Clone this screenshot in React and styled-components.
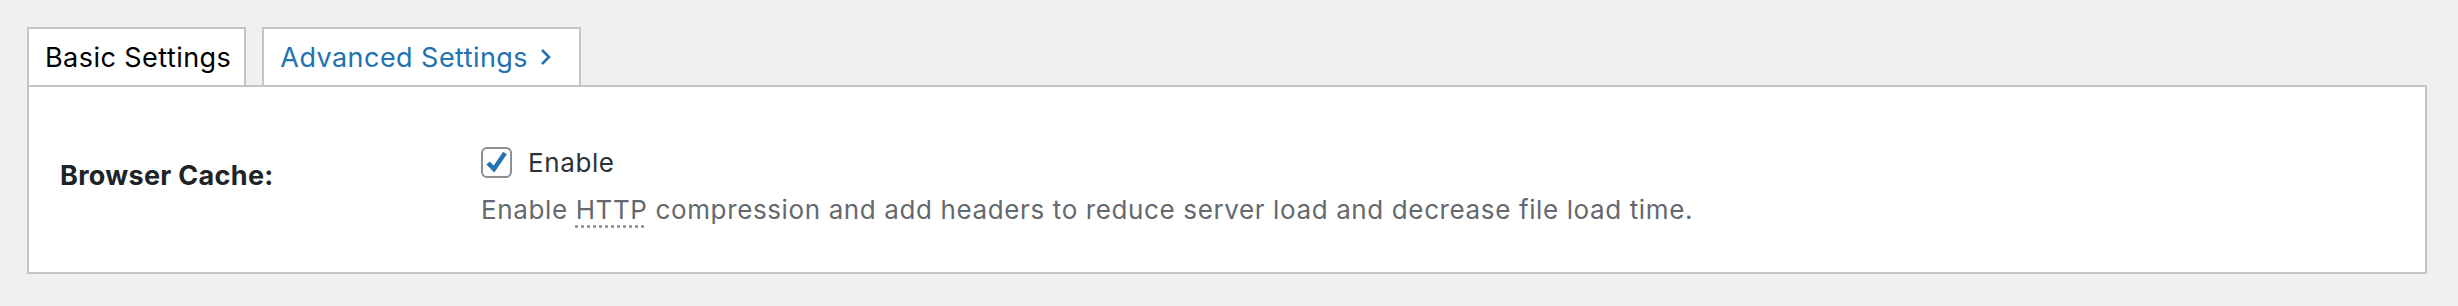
import React from "react";
import styled, { createGlobalStyle } from "styled-components";

const GlobalStyle = createGlobalStyle`
  html, body {
    margin: 0;
    padding: 0;
    background: #f0f0f1;
  }
  body {
    font-family: Inter, "Liberation Sans", sans-serif;
    -webkit-font-smoothing: antialiased;
  }
`;

const Page = styled.div`
  padding: 27px 31px 34px 27px;
`;

const TabBar = styled.nav`
  display: flex;
  gap: 16px;
`;

const Tab = styled.a`
  display: flex;
  align-items: center;
  gap: 12px;
  height: 56px;
  padding: 0 ${(p) => (p.$extra ? "28px" : "13px")} 0 16px;
  border: 2px solid #c3c4c7;
  border-bottom: none;
  background: #fff;
  font-size: 27px;
  letter-spacing: 0.45px;
  color: ${(p) => (p.$active ? "#000" : "#2271b1")};
  text-decoration: none;
  cursor: pointer;
`;

const Panel = styled.section`
  background: #fff;
  border: 2px solid #c3c4c7;
  padding: 60px 31px 46px;
`;

const FormRow = styled.div`
  display: grid;
  grid-template-columns: 421px 1fr;
  align-items: start;
`;

const Label = styled.div`
  padding-top: 11px;
  font-size: 27px;
  font-weight: 700;
  letter-spacing: 0.3px;
  color: #1d2327;
  line-height: 36px;
`;

const Field = styled.div`
  display: flex;
  flex-direction: column;
  gap: 16px;
`;

const CheckRow = styled.label`
  display: flex;
  align-items: center;
  gap: 16px;
  font-size: 26px;
  letter-spacing: 0.6px;
  color: #2c3338;
  line-height: 31px;
`;

const Box = styled.span`
  display: flex;
  align-items: center;
  justify-content: center;
  width: 31px;
  height: 31px;
  box-sizing: border-box;
  border: 2px solid #8c8f94;
  border-radius: 6px;
  background: #fff;
`;

const Description = styled.p`
  margin: 0;
  font-size: 26px;
  letter-spacing: 0.62px;
  line-height: 32px;
  color: #646970;
`;

const Abbr = styled.abbr`
  text-decoration: underline dotted #8c8f94;
  text-underline-offset: 6px;
  cursor: help;
`;

const Chevron = () => (
  <svg width="11" height="18" viewBox="0 0 11 18">
    <polyline points="2,2 9,9 2,16" fill="none" stroke="#2271b1" strokeWidth="2.6" />
  </svg>
);

const Check = () => (
  <svg width="25" height="25" viewBox="0 0 25 25">
    <polyline
      points="4,13 10,19 21,3"
      fill="none"
      stroke="#2271b1"
      strokeWidth="4.5"
      strokeLinejoin="miter"
    />
  </svg>
);

export default function App() {
  return (
    <>
      <GlobalStyle />
      <Page>
        <TabBar>
          <Tab $active>Basic Settings</Tab>
          <Tab $extra>
            Advanced Settings <Chevron />
          </Tab>
        </TabBar>
        <Panel>
          <FormRow>
            <Label>Browser Cache:</Label>
            <Field>
              <CheckRow>
                <Box>
                  <Check />
                </Box>
                Enable
              </CheckRow>
              <Description>
                Enable <Abbr title="Hypertext Transfer Protocol">HTTP</Abbr> compression and add
                headers to reduce server load and decrease file load time.
              </Description>
            </Field>
          </FormRow>
        </Panel>
      </Page>
    </>
  );
}
